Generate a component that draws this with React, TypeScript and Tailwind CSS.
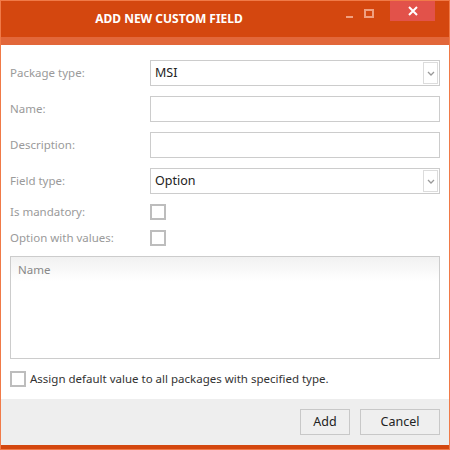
import { ReactNode } from "react";

const font = { fontFamily: '"Noto Sans", "Open Sans", sans-serif' };

function Row({ label, children }: { label: string; children: ReactNode }) {
  return (
    <div className="flex items-center">
      <div className="w-[140px] text-[11.5px] text-[#9a9a9a]">{label}</div>
      <div className="flex-1">{children}</div>
    </div>
  );
}

function Select({ value }: { value: string }) {
  return (
    <div className="h-[26px] border border-[#cccccc] bg-white flex items-center pl-[4px] pr-px">
      <span className="flex-1 text-[12.5px] text-[#222]">{value}</span>
      <div className="w-[15px] h-[22px] border border-[#dcdcdc] flex items-center justify-center">
        <svg width="8" height="5" viewBox="0 0 8 5" fill="none">
          <path d="M1 1l3 3 3-3" stroke="#999" strokeWidth="1.3" />
        </svg>
      </div>
    </div>
  );
}

function TextBox() {
  return <div className="h-[26px] border border-[#cccccc] bg-white" />;
}

function Check() {
  return <div className="w-[16px] h-[16px] border-2 border-[#bdbdbd] bg-white" />;
}

export default function App() {
  return (
    <div className="w-[450px] h-[450px] flex flex-col bg-white" style={font}>
      {/* Title bar */}
      <div className="h-[37px] bg-[#d4470f] border-t border-x border-[#f07a48] flex items-start relative">
        <div className="absolute left-0 right-0 top-[9px] text-center pr-[112px] text-[12px] font-bold text-white">
          ADD NEW CUSTOM FIELD
        </div>
        <div className="ml-auto flex items-start">
          <div className="w-[7px] h-[2px] bg-[#f0a080] mt-[15px] mr-[11px]" />
          <div className="w-[10px] h-[9px] border-2 border-[#f0a080] mt-[8px] mr-[16px]" />
          <div className="w-[45px] h-[20px] bg-[#e2524a] flex items-center justify-center mr-[14px]">
            <svg width="10" height="10" viewBox="0 0 10 10">
              <path d="M1 1l8 8M9 1l-8 8" stroke="white" strokeWidth="2" />
            </svg>
          </div>
        </div>
      </div>
      <div className="h-[8px] bg-[#e2673a] border-x border-[#f07a48]" />

      {/* Body */}
      <div className="flex-1 flex flex-col border-x border-[#f07a48] px-[9px] pt-[15px]">
        <div className="flex flex-col gap-[10px]">
          <Row label="Package type:">
            <Select value="MSI" />
          </Row>
          <Row label="Name:">
            <TextBox />
          </Row>
          <Row label="Description:">
            <TextBox />
          </Row>
          <Row label="Field type:">
            <Select value="Option" />
          </Row>
        </div>
        <div className="mt-[5px] flex flex-col">
          <div className="h-[26px] flex items-center">
            <div className="w-[140px] text-[11.5px] text-[#9a9a9a]">Is mandatory:</div>
            <Check />
          </div>
          <div className="h-[26px] flex items-center">
            <div className="w-[140px] text-[11.5px] text-[#9a9a9a]">Option with values:</div>
            <Check />
          </div>
        </div>
        <div className="mt-[5px] h-[103px] border border-[#cccccc] bg-white">
          <div className="h-[24px] bg-gradient-to-b from-[#f1f1f1] to-white px-[7px] pt-[4px] text-[11.5px] text-[#888]">
            Name
          </div>
        </div>
        <div className="mt-[11px] flex items-center gap-[4px]">
          <Check />
          <span className="text-[11.5px] text-[#333]">Assign default value to all packages with specified type.</span>
        </div>
      </div>

      {/* Footer */}
      <div className="h-[46px] bg-[#eeeeee] border-x border-[#f07a48] flex items-start justify-end gap-[10px] pt-[10px] pr-[9px]">
        <button className="w-[50px] h-[26px] border border-[#c8c8c8] bg-[#efefef] text-[12.5px] text-[#222]">Add</button>
        <button className="w-[80px] h-[26px] border border-[#c8c8c8] bg-[#efefef] text-[12.5px] text-[#222]">Cancel</button>
      </div>
      <div className="h-[4px] bg-[#d4470f] border-x border-[#f07a48]" />
      <div className="h-px bg-[#f07a48]" />
    </div>
  );
}
